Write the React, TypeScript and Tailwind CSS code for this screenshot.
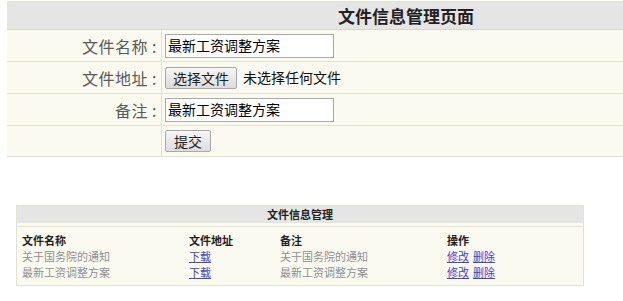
import React from "react";

const sans = { fontFamily: '"Noto Sans CJK SC", "Liberation Sans", sans-serif' };

function Btn({ children, className = "" }: { children: React.ReactNode; className?: string }) {
  return (
    <span
      className={
        "inline-flex items-center justify-center h-[22px] px-[6px] border border-[#a8a8a8] rounded-[2px] bg-gradient-to-b from-[#f6f6f6] to-[#dcdcdc] text-[14px] text-[#222] leading-none " +
        className
      }
    >
      {children}
    </span>
  );
}

function Row({ label, children, last = false }: { label: string; children: React.ReactNode; last?: boolean }) {
  return (
    <div className={"flex border-b border-[#e2e3cc] " + (last ? "h-[31px]" : "h-[32px]")}>
      <div className="w-[155px] shrink-0 border-r border-[#e2e3cc] flex items-center justify-end pr-[4px] text-[16px] text-[#5a5a5a] tracking-[0.5px]">
        {label}
      </div>
      <div className="flex items-center pl-[3px] gap-[6px]">{children}</div>
    </div>
  );
}

export default function App() {
  return (
    <div className="w-[623px] h-[301px] overflow-hidden bg-white" style={sans}>
      <div className="pl-[7px] pt-[1px]">
        <div className="w-[798px] bg-[#fafaf0] border-t border-[#e2e3cc]">
          <div className="h-[28px] bg-[#e5e5e5] border-b border-[#d6d8c4] flex items-center justify-center text-[17px] font-bold text-[#222]">
            文件信息管理页面
          </div>
          <Row label="文件名称 :">
            <div className="w-[169px] h-[24px] bg-white border border-[#a9a9a9] flex items-center pl-[2px] text-[14px] text-black">
              最新工资调整方案
            </div>
          </Row>
          <Row label="文件地址 :">
            <Btn className="w-[72px]">选择文件</Btn>
            <span className="text-[14px] text-[#111]">未选择任何文件</span>
          </Row>
          <Row label="备注 :">
            <div className="w-[169px] h-[24px] bg-white border border-[#a9a9a9] flex items-center pl-[2px] text-[14px] text-black">
              最新工资调整方案
            </div>
          </Row>
          <Row label="" last>
            <Btn className="w-[46px]">提交</Btn>
          </Row>
        </div>
      </div>

      <div className="pl-[16px] pt-[48px]">
        <div className="w-[568px] bg-[#fafaf0] border border-[#e2e3cc] text-[11px]">
          <div className="h-[17px] bg-[#e5e5e5] flex items-center justify-center font-bold text-[#222]">
            文件信息管理
          </div>
          <div className="h-[4px] border-b border-[#e6e7d3]" />
          <div className="px-[5px] pt-[5px] pb-[5px]">
            <div className="flex h-[16px] items-center font-bold text-[#222]">
              <span className="w-[167px]">文件名称</span>
              <span className="w-[91px]">文件地址</span>
              <span className="w-[167px]">备注</span>
              <span>操作</span>
            </div>
            {["关于国务院的通知", "最新工资调整方案"].map((t) => (
              <div key={t} className="flex h-[16px] items-center text-[#909090]">
                <span className="w-[167px]">{t}</span>
                <span className="w-[91px]">
                  <a className="text-[#4444cc] underline">下载</a>
                </span>
                <span className="w-[167px]">{t}</span>
                <span className="flex gap-[4px]">
                  <a className="text-[#4444cc] underline">修改</a>
                  <a className="text-[#4444cc] underline">删除</a>
                </span>
              </div>
            ))}
          </div>
        </div>
      </div>
    </div>
  );
}
